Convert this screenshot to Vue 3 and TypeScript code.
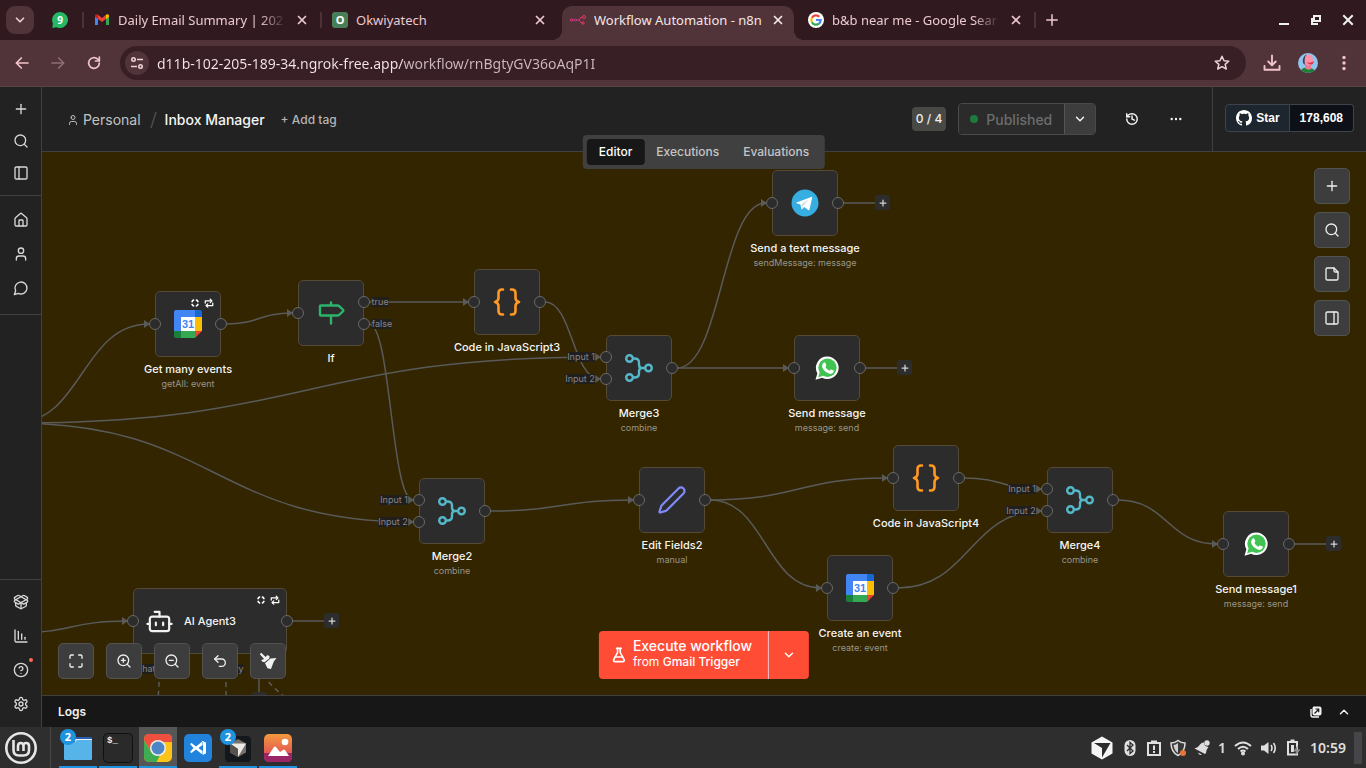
<script setup lang="ts">
import { computed, ref } from 'vue'

const icons: Record<string, string[]> = {
  plus: ['M5 12h14', 'M12 5v14'],
  search: ['M3 11a8 8 0 1 0 16 0a8 8 0 1 0-16 0', 'm21 21-4.3-4.3'],
  panelLeft: ['M5 3h14a2 2 0 0 1 2 2v14a2 2 0 0 1-2 2H5a2 2 0 0 1-2-2V5a2 2 0 0 1 2-2z', 'M9 3v18'],
  panelRight: ['M5 3h14a2 2 0 0 1 2 2v14a2 2 0 0 1-2 2H5a2 2 0 0 1-2-2V5a2 2 0 0 1 2-2z', 'M15 3v18'],
  home: ['M15 21v-8a1 1 0 0 0-1-1h-4a1 1 0 0 0-1 1v8', 'M3 10a2 2 0 0 1 .709-1.528l7-5.999a2 2 0 0 1 2.582 0l7 5.999A2 2 0 0 1 21 10v9a2 2 0 0 1-2 2H5a2 2 0 0 1-2-2z'],
  user: ['M19 21v-2a4 4 0 0 0-4-4H9a4 4 0 0 0-4 4v2', 'M8 7a4 4 0 1 0 8 0a4 4 0 1 0-8 0'],
  chat: ['M7.9 20A9 9 0 1 0 4 16.1L2 22Z'],
  package: ['M12 22v-9', 'M15.17 2.21a1.67 1.67 0 0 1 1.63 0L21 4.57a1.93 1.93 0 0 1 0 3.36L8.82 14.79a1.655 1.655 0 0 1-1.64 0L3 12.43a1.93 1.93 0 0 1 0-3.36z', 'M20 13v3.87a2.06 2.06 0 0 1-1.11 1.83l-6 3.08a1.93 1.93 0 0 1-1.78 0l-6-3.08A2.06 2.06 0 0 1 4 16.87V13', 'M21 12.43a1.93 1.93 0 0 0 0-3.36L8.83 2.2a1.64 1.64 0 0 0-1.63 0L3 4.57a1.93 1.93 0 0 0 0 3.36l12.18 6.86a1.636 1.636 0 0 0 1.63 0z'],
  chart: ['M13 17V9', 'M18 17v-3', 'M3 3v16a2 2 0 0 0 2 2h16', 'M8 17V5'],
  help: ['M2 12a10 10 0 1 0 20 0a10 10 0 1 0-20 0', 'M9.09 9a3 3 0 0 1 5.83 1c0 2-3 3-3 3', 'M12 17h.01'],
  settings: ['M12.22 2h-.44a2 2 0 0 0-2 2v.18a2 2 0 0 1-1 1.73l-.43.25a2 2 0 0 1-2 0l-.15-.08a2 2 0 0 0-2.73.73l-.22.38a2 2 0 0 0 .73 2.73l.15.1a2 2 0 0 1 1 1.72v.51a2 2 0 0 1-1 1.74l-.15.09a2 2 0 0 0-.73 2.73l.22.38a2 2 0 0 0 2.73.73l.15-.08a2 2 0 0 1 2 0l.43.25a2 2 0 0 1 1 1.73V20a2 2 0 0 0 2 2h.44a2 2 0 0 0 2-2v-.18a2 2 0 0 1 1-1.73l.43-.25a2 2 0 0 1 2 0l.15.08a2 2 0 0 0 2.73-.73l.22-.39a2 2 0 0 0-.73-2.73l-.15-.08a2 2 0 0 1-1-1.74v-.5a2 2 0 0 1 1-1.74l.15-.09a2 2 0 0 0 .73-2.73l-.22-.38a2 2 0 0 0-2.73-.73l-.15.08a2 2 0 0 1-2 0l-.43-.25a2 2 0 0 1-1-1.73V4a2 2 0 0 0-2-2z', 'M9 12a3 3 0 1 0 6 0a3 3 0 1 0-6 0'],
  maximize: ['M8 3H5a2 2 0 0 0-2 2v3', 'M21 8V5a2 2 0 0 0-2-2h-3', 'M3 16v3a2 2 0 0 0 2 2h3', 'M16 21h3a2 2 0 0 0 2-2v-3'],
  zoomIn: ['M3 11a8 8 0 1 0 16 0a8 8 0 1 0-16 0', 'm21 21-4.3-4.3', 'M11 8v6', 'M8 11h6'],
  zoomOut: ['M3 11a8 8 0 1 0 16 0a8 8 0 1 0-16 0', 'm21 21-4.3-4.3', 'M8 11h6'],
  undo: ['M9 14 4 9l5-5', 'M4 9h10.5a5.5 5.5 0 0 1 0 11H11'],
  history: ['M3 12a9 9 0 1 0 9-9 9.75 9.75 0 0 0-6.74 2.74L3 8', 'M3 3v5h5', 'M12 7v5l4 2'],
  flask: ['M14 2v6a2 2 0 0 0 .245.96l5.51 10.08A2 2 0 0 1 18 22H6a2 2 0 0 1-1.755-2.96l5.51-10.08A2 2 0 0 0 10 8V2', 'M6.453 15h11.094', 'M8.5 2h7'],
  note: ['M15 3H5a2 2 0 0 0-2 2v14a2 2 0 0 0 2 2h14a2 2 0 0 0 2-2V9Z', 'M15 3v4a2 2 0 0 0 2 2h4'],
  down: ['m6 9 6 6 6-6'],
  up: ['m6 15 6-6 6 6'],
  close: ['M6 6l12 12', 'M18 6 6 18'],
  back: ['M21 12H4', 'M11 4.500 3.500 12l7.500 7.500'],
  forward: ['M3 12h17', 'M13 4.500 20.500 12l-7.500 7.500'],
  reload: ['M20 12a8 8 0 1 1-2.600-5.900L20 8.500', 'M20 3v6h-6'],
  star: ['m12 3 2.700 6 6.300.6-4.800 4.200 1.500 6.200-5.700-3.300L6.300 20l1.500-6.200L3 9.600 9.300 9z'],
  download: ['M12 2v13', 'm7 10 5 5 5-5', 'M2 16v5h20v-5'],
  bot: ['M12 8V4H8', 'M6 8h12a2 2 0 0 1 2 2v8a2 2 0 0 1-2 2H6a2 2 0 0 1-2-2v-8a2 2 0 0 1 2-2z', 'M2 14h2', 'M20 14h2', 'M15 13v2', 'M9 13v2'],
  once: ['M5 8.500A8 8 0 0 1 8.500 5', 'M15.500 5A8 8 0 0 1 19 8.500', 'M19 15.500A8 8 0 0 1 15.500 19', 'M8.500 19A8 8 0 0 1 5 15.500'],
  repeat: ['M3 12V7h15', 'm15 3 4 4-4 4', 'M21 12v6H6', 'm9 14-4 4 4 4'],
}

interface Tab { kind: string; title: string; fade?: boolean; active?: boolean }
const tabs: Tab[] = [
  { kind: 'gmail', title: 'Daily Email Summary | 202', fade: true },
  { kind: 'okwi', title: 'Okwiyatech' },
  { kind: 'n8n', title: 'Workflow Automation - n8n', active: true },
  { kind: 'google', title: 'b&b near me - Google Sear', fade: true },
]
const url = ref('d11b-102-205-189-34.ngrok-free.app/workflow/rnBgtyGV36oAqP1I')

interface Port { x: number; y: number }
interface FlowNode {
  kind: string; title: string; sub?: string; x: number; y: number
  ins: number[]; outs: number[]; flags?: boolean; wide?: boolean
}
const nodes: FlowNode[] = [
  { kind: 'calendar', title: 'Get many events', sub: 'getAll: event', x: 113, y: 139, ins: [33], outs: [33], flags: true },
  { kind: 'if', title: 'If', x: 256, y: 128, ins: [33], outs: [22, 44] },
  { kind: 'code', title: 'Code in JavaScript3', x: 432, y: 117, ins: [33], outs: [33] },
  { kind: 'merge', title: 'Merge3', sub: 'combine', x: 564, y: 183, ins: [22, 44], outs: [33] },
  { kind: 'telegram', title: 'Send a text message', sub: 'sendMessage: message', x: 730, y: 18, ins: [33], outs: [33] },
  { kind: 'whatsapp', title: 'Send message', sub: 'message: send', x: 752, y: 183, ins: [33], outs: [33] },
  { kind: 'merge', title: 'Merge2', sub: 'combine', x: 377, y: 326, ins: [22, 44], outs: [33] },
  { kind: 'edit', title: 'Edit Fields2', sub: 'manual', x: 597, y: 315, ins: [33], outs: [33] },
  { kind: 'code', title: 'Code in JavaScript4', x: 851, y: 293, ins: [33], outs: [33] },
  { kind: 'merge', title: 'Merge4', sub: 'combine', x: 1005, y: 315, ins: [22, 44], outs: [33] },
  { kind: 'calendar', title: 'Create an event', sub: 'create: event', x: 785, y: 403, ins: [33], outs: [33] },
  { kind: 'whatsapp', title: 'Send message1', sub: 'message: send', x: 1181, y: 359, ins: [33], outs: [33] },
  { kind: 'agent', title: 'AI Agent3', x: 91, y: 436, ins: [33], outs: [33], flags: true, wide: true },
]
const NODE = 66
const WIDE = 154
function out(n: number, i = 0): Port {
  const v = nodes[n]
  return { x: v.x + (v.wide ? WIDE : NODE) + 5, y: v.y + v.outs[i] }
}
function into(n: number, i = 0): Port {
  const v = nodes[n]
  return { x: v.x - 6, y: v.y + v.ins[i] }
}
const source: Port = { x: -27, y: 271 }
const links: [Port, Port][] = [
  [source, into(0)],
  [source, into(3, 0)],
  [source, into(6, 1)],
  [{ x: -27, y: 481 }, into(12)],
  [out(0), into(1)],
  [out(1, 0), into(2)],
  [out(1, 1), into(6, 0)],
  [out(2), into(3, 1)],
  [out(3), into(4)],
  [out(3), into(5)],
  [out(6), into(7)],
  [out(7), into(8)],
  [out(7), into(10)],
  [out(8), into(9, 0)],
  [out(10), into(9, 1)],
  [out(9), into(11)],
]
const edges = computed(() => links.map(([a, b]) => {
  const h = (b.x - a.x) / 2
  return {
    line: `M${a.x} ${a.y}C${a.x + h} ${a.y} ${b.x - h} ${b.y} ${b.x} ${b.y}`,
    head: `M${b.x - 5} ${b.y - 4}L${b.x + 1} ${b.y}L${b.x - 5} ${b.y + 4}Z`,
  }
}))
const ends = [4, 5, 11, 12].map((n) => out(n))
const labels = [
  { text: 'true', x: 338, y: 150 },
  { text: 'false', x: 340, y: 172 },
  { text: 'Input 1', x: 539, y: 205 },
  { text: 'Input 2', x: 538, y: 227 },
  { text: 'Input 1', x: 352, y: 348 },
  { text: 'Input 2', x: 351, y: 370 },
  { text: 'Input 1', x: 980, y: 337 },
  { text: 'Input 2', x: 979, y: 359 },
  { text: 'Chat Model', x: 118, y: 517 },
  { text: 'Memory', x: 184, y: 517 },
]
const at = (x: number, y: number) => ({ left: x + 'px', top: y + 'px' })

const sideGroups = [['plus', 'search', 'panelLeft'], ['home', 'user', 'chat']]
const sideBottom = ['package', 'chart', 'help', 'settings']
const views = ['Editor', 'Executions', 'Evaluations']
const view = ref('Editor')
const apps = [
  { kind: 'files', badge: 2, open: true },
  { kind: 'terminal', open: true },
  { kind: 'chrome', open: true, focus: true },
  { kind: 'vscode' },
  { kind: 'cursor', badge: 2, open: true },
  { kind: 'photos', open: true },
]
</script>

<template>
  <div class="screen">
    <header class="tabstrip">
      <button class="tab-search" aria-label="Search tabs"><svg class="ic s14 bold" viewBox="0 0 24 24"><path v-for="d in icons.down" :key="d" :d="d" /></svg></button>
      <button class="pinned" aria-label="WhatsApp">
        <svg width="16" height="16" viewBox="0 0 16 16"><path d="M8 0a8 8 0 1 1-3.500 15.200L.3 16l.6-4.500A8 8 0 0 1 8 0z" fill="#25b865" /><text x="8" y="11.500" text-anchor="middle" class="nine">9</text></svg>
      </button>
      <div v-for="t in tabs" :key="t.title" class="tab" :class="{ active: t.active }">
        <svg v-if="t.kind === 'gmail'" width="16" height="16" viewBox="0 0 16 16"><path d="M1 4v9h3V6z" fill="#4285f4" /><path d="M12 6v7h3V4z" fill="#34a853" /><path d="M4 2.800 8 6l4-3.200V7L8 10 4 7z" fill="#ea4335" /><path d="M1 4c0-2 1.800-2 3-1.200V7L1 5z" fill="#c5221f" /><path d="M15 4c0-2-1.800-2-3-1.200V7l3-2z" fill="#fbbc04" /></svg>
        <span v-else-if="t.kind === 'okwi'" class="okwi">O</span>
        <svg v-else-if="t.kind === 'n8n'" width="16" height="16" viewBox="0 0 16 16" fill="none" stroke="#e8386d"><circle cx="1.500" cy="8" r="1.100" /><circle cx="5.500" cy="8" r="1.100" stroke="#b03a9d" /><circle cx="14" cy="5" r="1.500" /><circle cx="13" cy="11" r="1.200" /><path d="M2.700 8h1.500M6.700 8h2q1 0 1.200-1.200.3-1.800 2.600-1.800M8.700 8q1 0 1.500 1.500.4 1.500 1.700 1.500" /></svg>
        <svg v-else width="16" height="16" viewBox="0 0 16 16"><circle cx="8" cy="8" r="8" fill="#fff" /><g fill="none" stroke-width="2.200"><path d="M11.300 4.700A4.700 4.700 0 0 0 3.900 5.700" stroke="#ea4335" /><path d="M3.900 5.700a4.700 4.700 0 0 0 0 4.600" stroke="#fbbc05" /><path d="M3.900 10.300a4.700 4.700 0 0 0 7 1.400" stroke="#34a853" /><path d="M10.900 11.700A4.700 4.700 0 0 0 12.700 8H8" stroke="#4285f4" /></g></svg>
        <span class="tab-title" :class="{ fade: t.fade }">{{ t.title }}</span>
        <button class="tab-close" :aria-label="'Close ' + t.title"><svg class="ic s14 bold" viewBox="0 0 24 24"><path v-for="d in icons.close" :key="d" :d="d" /></svg></button>
      </div>
      <button class="new-tab" aria-label="New tab"><svg class="ic s18" viewBox="0 0 24 24"><path v-for="d in icons.plus" :key="d" :d="d" /></svg></button>
      <div class="window-controls">
        <button aria-label="Minimise"><svg width="14" height="14" viewBox="0 0 14 14"><path d="M2 11h10" stroke="#f0f0f0" stroke-width="2" /></svg></button>
        <button aria-label="Restore"><svg width="14" height="14" viewBox="0 0 14 14" fill="none" stroke="#f0f0f0" stroke-width="2"><path d="M5 3h6v5H5zM3 5v6h6" /></svg></button>
        <button aria-label="Close window"><svg width="14" height="14" viewBox="0 0 14 14"><path d="m3 3 8 8M11 3l-8 8" stroke="#f0f0f0" stroke-width="2" stroke-linecap="square" /></svg></button>
      </div>
    </header>

    <div class="toolbar">
      <nav class="nav-buttons">
        <button v-for="n in ['back', 'forward', 'reload']" :key="n" :class="n" :aria-label="n"><svg class="ic s16 mid" viewBox="0 0 24 24"><path v-for="d in icons[n]" :key="d" :d="d" /></svg></button>
      </nav>
      <div class="omnibox">
        <button class="site" aria-label="Site information">
          <svg width="14" height="14" viewBox="0 0 14 14" fill="none" stroke="#ecd3d7" stroke-width="1.600"><circle cx="3.500" cy="3.500" r="1.700" /><circle cx="10.500" cy="10.500" r="1.700" /><path d="M7 3.500h6M1 10.500h6" /></svg>
        </button>
        <input v-model="url" class="url" aria-label="Address" spellcheck="false" />
        <button class="bookmark" aria-label="Bookmark"><svg class="ic s18" viewBox="0 0 24 24"><path v-for="d in icons.star" :key="d" :d="d" /></svg></button>
      </div>
      <nav class="nav-buttons">
        <button aria-label="Downloads"><svg class="ic s18 mid" viewBox="0 0 24 24"><path v-for="d in icons.download" :key="d" :d="d" /></svg></button>
        <button aria-label="Profile">
          <svg width="20" height="20" viewBox="0 0 20 20"><defs><clipPath id="face"><circle cx="10" cy="10" r="10" /></clipPath></defs><g clip-path="url(#face)"><path d="M0 0h20v20H0z" fill="#8fc4ee" /><path d="M2 20q1-6 8-5 7 0 8 5z" fill="#1c8039" /><path d="M7 9h6v7q-3 2-6-1z" fill="#e87b90" /><ellipse cx="10.500" cy="7" rx="4.500" ry="5.500" fill="#ff92a8" /><path d="M5 10Q4 3 9 1.500 5.500 4 7 12z" fill="#3b3f52" /><path d="M8 9q5 2 8-1-1 5-5 3z" fill="#d8304b" /></g></svg>
        </button>
        <button aria-label="Menu"><svg width="16" height="16" viewBox="0 0 16 16" fill="#f2c3cc"><circle cx="8" cy="2.500" r="1.700" /><circle cx="8" cy="8" r="1.700" /><circle cx="8" cy="13.500" r="1.700" /></svg></button>
      </nav>
    </div>

    <div class="app">
      <aside class="sidebar">
        <nav v-for="(g, i) in sideGroups" :key="i" :class="'group-' + i">
          <button v-for="n in g" :key="n" :aria-label="n"><svg class="ic s16" viewBox="0 0 24 24"><path v-for="d in icons[n]" :key="d" :d="d" /></svg></button>
        </nav>
        <nav class="group-bottom">
          <button v-for="n in sideBottom" :key="n" :class="n" :aria-label="n"><svg class="ic s16" viewBox="0 0 24 24"><path v-for="d in icons[n]" :key="d" :d="d" /></svg></button>
        </nav>
      </aside>

      <main class="workspace">
        <header class="head">
          <div class="crumbs">
            <a href="#" class="project"><svg class="ic s12" viewBox="0 0 24 24"><path v-for="d in icons.user" :key="d" :d="d" /></svg>Personal</a>
            <svg class="slash" width="7" height="18" viewBox="0 0 7 18"><path d="M6 1 1 17" stroke="#4a4a4a" stroke-width="1.500" /></svg>
            <h1>Inbox Manager</h1>
            <button class="add-tag">+ Add tag</button>
          </div>
          <div class="actions">
            <span class="count">0 / 4</span>
            <div class="publish">
              <button class="published" disabled><i></i>Published</button>
              <button class="more" aria-label="Publish options"><svg class="ic s14 mid" viewBox="0 0 24 24"><path :d="icons.down[0]" /></svg></button>
            </div>
            <button class="icon-btn" aria-label="History"><svg class="ic s14 mid" viewBox="0 0 24 24"><path v-for="d in icons.history" :key="d" :d="d" /></svg></button>
            <button class="icon-btn" aria-label="More"><svg width="12" height="12" viewBox="0 0 12 12" fill="#f2f2f2"><circle cx="1.700" cy="6" r="1.200" /><circle cx="6" cy="6" r="1.200" /><circle cx="10.300" cy="6" r="1.200" /></svg></button>
          </div>
          <div class="github">
            <a href="#" class="gh-star"><svg width="16" height="16" viewBox="0 0 16 16" fill="#fff"><path d="M8 0C3.580 0 0 3.580 0 8c0 3.540 2.290 6.530 5.470 7.590.4.070.55-.17.55-.38 0-.19-.01-.82-.01-1.490-2.010.37-2.530-.49-2.690-.94-.09-.23-.48-.94-.82-1.130-.28-.15-.68-.52-.01-.53.63-.01 1.080.58 1.230.82.72 1.210 1.870.87 2.330.66.07-.52.28-.87.51-1.070-1.780-.2-3.640-.89-3.640-3.950 0-.87.31-1.590.82-2.150-.08-.2-.36-1.020.08-2.120 0 0 .67-.21 2.200.82.64-.18 1.320-.27 2-.27s1.360.09 2 .27c1.530-1.040 2.200-.82 2.200-.82.44 1.100.16 1.920.08 2.120.51.56.82 1.270.82 2.150 0 3.070-1.870 3.750-3.650 3.950.29.25.54.73.54 1.480 0 1.070-.01 1.930-.01 2.200 0 .21.15.46.55.38A8.010 8.010 0 0 0 16 8c0-4.420-3.580-8-8-8z" /></svg>Star</a>
            <a href="#" class="gh-count">178,608</a>
          </div>
        </header>

        <nav class="views">
          <button v-for="v in views" :key="v" :class="{ on: v === view }" @click="view = v">{{ v }}</button>
        </nav>

        <section class="canvas">
          <svg class="edges">
            <g v-for="(e, i) in edges" :key="i"><path :d="e.line" class="wire" /><path :d="e.head" class="head-mark" /></g>
            <path v-for="(e, i) in ends" :key="'e' + i" :d="`M${e.x} ${e.y}h32`" class="wire" />
            <path d="M118 503Q118 525 115 560M184 503V560" class="wire dashed" />
            <path d="M217 503V545" class="wire" />
            <path d="M217 515Q224 532 250 550" class="wire dashed" />
          </svg>
          <button v-for="(e, i) in ends" :key="'p' + i" class="add-node" :style="at(e.x + 32, e.y - 8)" aria-label="Add node"><svg class="ic s10 bold" viewBox="0 0 24 24"><path v-for="d in icons.plus" :key="d" :d="d" /></svg></button>
          <button class="add-node" :style="at(210, 540)" aria-label="Add tool"></button>
          <span v-for="(l, i) in labels" :key="'l' + i" class="port-label" :style="at(l.x, l.y)">{{ l.text }}</span>

          <article v-for="(n, i) in nodes" :key="i" class="node" :class="{ wide: n.wide }" :style="at(n.x, n.y)">
            <div class="box">
              <svg v-if="n.kind === 'calendar'" width="28" height="28" viewBox="0 0 28 28"><path d="M2 0h19v7H7v14H0V2q0-2 2-2z" fill="#4285f4" /><path d="M21 0h5q2 0 2 2v5h-7z" fill="#1967d2" /><path d="M21 7h7v14h-7z" fill="#fbbc04" /><path d="M7 21h14v7H7z" fill="#34a853" /><path d="M0 21h7v7H2q-2 0-2-2z" fill="#188038" /><path d="M21 21h7l-7 7z" fill="#ea4335" /><path d="M7 7h14v14H7z" fill="#fff" /><text x="14" y="18" text-anchor="middle" class="cal">31</text></svg>
              <svg v-else-if="n.kind === 'if'" width="28" height="28" viewBox="-14 -14 28 28" fill="none" stroke="#2cb46b" stroke-width="2.400" stroke-linecap="round" stroke-linejoin="round"><path d="M0-10.500v3M0 3v7.500M-10.200-7.500H6.500q1 0 1.700.6l3.600 3.400q1 1 0 2L8.200 1.900Q7.500 2.500 6.500 2.500h-16.700q-.8 0-.8-.8v-8.400q0-.8.8-.8z" /></svg>
              <svg v-else-if="n.kind === 'code'" width="28" height="28" viewBox="-14 -14 28 28" fill="none" stroke="#ff9922" stroke-width="2.600" stroke-linecap="round" stroke-linejoin="round"><path d="M-4-12.500h-1q-3.500 0-3.500 3.500v5q0 3-3.500 4 3.500 1 3.500 4v5q0 3.500 3.500 3.500h1M4-12.500h1q3.500 0 3.500 3.500v5q0 3 3.500 4-3.500 1-3.500 4v5q0 3.500-3.500 3.500h-1" /></svg>
              <svg v-else-if="n.kind === 'merge'" width="28" height="28" viewBox="-14 -14 28 28" fill="none" stroke="#54b8c9" stroke-width="2.400"><circle cx="-9.500" cy="-9.500" r="3.300" /><circle cx="-9.500" cy="9.500" r="3.300" /><circle cx="9.500" cy="0" r="3.300" /><path d="M-6-9.500h1.500Q0-9.500 0-5.500v2Q0 0 3 0h3M-6 9.500h1.500Q0 9.500 0 5.500v-2Q0 0 3 0" /></svg>
              <svg v-else-if="n.kind === 'telegram'" width="28" height="28" viewBox="0 0 28 28"><circle cx="14" cy="14" r="13.500" fill="#37aee2" /><path d="M5.500 13.600 20.300 7.900q1-.3.800.9l-2.500 11.500q-.4 1.300-1.500.6l-3.800-2.800-2 2q-.7.600-.9-.4l-1-4.200-3.800-1.200q-.9-.4-.1-.7z" fill="#fff" /><path d="m10.400 15.300 7.400-4.900-5.700 6-.5 3.200z" fill="#c8daea" /></svg>
              <svg v-else-if="n.kind === 'whatsapp'" width="26" height="26" viewBox="0 0 26 26"><path d="M13.500 1.500a11.300 11.300 0 1 1-5.400 21.300L1.500 24.700l1.900-6.400A11.300 11.300 0 0 1 13.500 1.500z" fill="#fff" /><circle cx="13.500" cy="12.800" r="9.200" fill="#40c351" /><path d="M4.200 22.200 5.700 17l3.500 3.700z" fill="#40c351" /><path d="M9.800 7.500q1-.6 1.500.2l1 2.400q.2.600-.9 1.800 1.500 2.800 4 3.800 1.200-1.500 1.700-1.300l2.500 1.200q.5.400 0 1.500-1 2-3.400 1.800-6.500-1.500-8.200-7.400-.2-2.700 1.800-4z" fill="#fff" /></svg>
              <svg v-else-if="n.kind === 'edit'" width="30" height="30" viewBox="0 0 24 24" fill="none" stroke="#8189f7" stroke-width="1.800" stroke-linecap="round" stroke-linejoin="round"><path d="M21.174 6.812a1 1 0 0 0-3.986-3.987L3.842 16.174a2 2 0 0 0-.5.83l-1.321 4.352a.5.5 0 0 0 .623.622l4.353-1.320a2 2 0 0 0 .83-.497z" /></svg>
              <template v-else>
                <svg class="ic robot" viewBox="0 0 24 24"><path v-for="d in icons.bot" :key="d" :d="d" /></svg>
                <strong>{{ n.title }}</strong>
              </template>
              <span v-if="n.flags" class="flags">
                <svg class="ic s10 heavy" viewBox="0 0 24 24"><path v-for="d in icons.once" :key="d" :d="d" /></svg>
                <svg class="ic s10 bold" viewBox="0 0 24 24"><path v-for="d in icons.repeat" :key="d" :d="d" /></svg>
              </span>
              <i v-for="y in n.ins" :key="'i' + y" class="port in" :style="{ top: y + 'px' }"></i>
              <i v-for="y in n.outs" :key="'o' + y" class="port out" :style="{ top: y + 'px' }"></i>
            </div>
            <template v-if="!n.wide">
              <strong>{{ n.title }}</strong>
              <small v-if="n.sub">{{ n.sub }}</small>
            </template>
          </article>

          <div class="controls side">
            <button v-for="n in ['plus', 'search', 'note', 'panelRight']" :key="n" :aria-label="n"><svg class="ic s16" viewBox="0 0 24 24"><path v-for="d in icons[n]" :key="d" :d="d" /></svg></button>
          </div>
          <div class="controls zoom">
            <button v-for="n in ['maximize', 'zoomIn', 'zoomOut', 'undo']" :key="n" :aria-label="n"><svg class="ic s16" viewBox="0 0 24 24"><path v-for="d in icons[n]" :key="d" :d="d" /></svg></button>
            <button aria-label="Tidy up"><svg width="18" height="18" viewBox="0 0 18 18" fill="#f2f2f2"><path d="M.800 2.200 2.200.800 6.700 5l1.800-1.900 2.100 1.200-.3 2.200L5.500 10.300l-2.600-.9-.4-1.400 2.600-1z" /><path d="M6 11.200 11.500 6.500 17.500 6 14.800 9.500 12 17 8.500 16.200z" /></svg></button>
          </div>
          <div class="execute">
            <button class="run"><svg class="ic s16 mid" viewBox="0 0 24 24"><path v-for="d in icons.flask" :key="d" :d="d" /></svg><span>Execute workflow<small>from <b>Gmail Trigger</b></small></span></button>
            <button class="pick" aria-label="Choose trigger"><svg class="ic s14 mid" viewBox="0 0 24 24"><path :d="icons.down[0]" /></svg></button>
          </div>
        </section>

        <footer class="logs">
          <span>Logs</span>
          <button aria-label="Pop out"><svg width="12" height="12" viewBox="0 0 12 12"><path d="M3.500.5h6q2 0 2 2v5q0 2-2 2h-5q-2 0-2-2v-5q0-1.500 1-2z" fill="#f4f4f4" /><path d="M1 3v6q0 2 2 2h6" fill="none" stroke="#f4f4f4" stroke-width="1.400" /><path d="m4.500 7.500 4-4M5.500 3h3.200v3.200" fill="none" stroke="#171717" stroke-width="1.200" /></svg></button>
          <button aria-label="Expand logs"><svg class="ic s14 mid" viewBox="0 0 24 24"><path :d="icons.up[0]" /></svg></button>
        </footer>
      </main>
    </div>

    <footer class="taskbar">
      <button class="mint" aria-label="Menu"><svg width="32" height="32" viewBox="0 0 32 32" fill="none" stroke="#e6e6e6"><circle cx="16" cy="16" r="14.700" stroke-width="2.600" /><path d="M8.500 8v10q0 5.500 5.500 5.500h4.500q5.500 0 5.500-5.500v-4q0-3-2.800-3t-2.700 3v5M18.500 14q0-3-2.700-3t-2.800 3v5" stroke-width="2.600" /></svg></button>
      <div class="apps">
        <button v-for="a in apps" :key="a.kind" :class="{ open: a.open, focus: a.focus }" :aria-label="a.kind">
          <svg v-if="a.kind === 'files'" width="30" height="30" viewBox="0 0 30 30"><path d="M9 4h18q2 0 2 2v4H9z" fill="#2a5fb4" /><path d="M12 6h17v4H12z" fill="#e9f2fa" /><path d="M1 9h11l2-2h15v19q0 1-1 1H2q-1 0-1-1z" fill="#56b4e9" /></svg>
          <svg v-else-if="a.kind === 'terminal'" width="30" height="30" viewBox="0 0 30 30"><rect x=".500" y=".500" width="29" height="29" rx="4" fill="#2a2a2a" stroke="#111" /><text x="4" y="10" class="term">$_</text></svg>
          <svg v-else-if="a.kind === 'chrome'" width="30" height="30" viewBox="0 0 30 30"><defs><clipPath id="sq"><rect x="1" y="1" width="28" height="28" rx="5" /></clipPath></defs><g clip-path="url(#sq)"><path d="M0 0h30v30H0z" fill="#fcc419" /><path d="M0 0h30v9H14L8 18 0 6z" fill="#ee4f3f" /><path d="M0 6l9 14 8 2-4 8H0z" fill="#3fab52" /></g><circle cx="15" cy="15" r="8" fill="#f3efe8" /><circle cx="15" cy="15" r="6.500" fill="#4d86c6" /></svg>
          <svg v-else-if="a.kind === 'vscode'" width="30" height="30" viewBox="0 0 30 30"><rect x="1" y="1" width="28" height="28" rx="5" fill="#2283dd" /><path d="M20 8v14l-7-5.500L8.500 20 7 19l3.500-4L7 11l1.500-1 4.500 3.500zM19.500 8 23 9.500v11L19.500 22zM19.500 12v6l-4-3z" fill="#fff" fill-rule="evenodd" /></svg>
          <svg v-else-if="a.kind === 'cursor'" width="30" height="30" viewBox="0 0 30 30"><rect x="2" y="3" width="26" height="26" rx="4" fill="#14171b" /><path d="m15 6 8 4.500v9L15 24l-8-4.500v-9z" fill="#77716c" /><path d="M7 10.500h16L15 24v-8z" fill="#eceae6" /><path d="M7 10.500 15 16v8l-8-4.500z" fill="#57524e" /></svg>
          <svg v-else width="30" height="30" viewBox="0 0 30 30"><defs><linearGradient id="sky" x2="0" y2="1"><stop stop-color="#f49a3e" /><stop offset="1" stop-color="#dc3b5c" /></linearGradient></defs><rect x="1" y="1" width="28" height="28" rx="5" fill="url(#sky)" /><path d="M1 20h28v4q0 5-5 5H6q-5 0-5-5z" fill="#9c2566" /><path d="m5 23 6-9q1-1 2 0l4 5 3-2q1-1 2 0l4 6z" fill="#fff" /><circle cx="22" cy="9" r="3.300" fill="#fff" /></svg>
          <em v-if="a.badge">{{ a.badge }}</em>
        </button>
      </div>
      <div class="tray">
        <svg width="24" height="24" viewBox="0 0 24 24"><path d="m12 .500 10.500 6v11L12 23.500 1.500 17.500v-11z" fill="#f5f5f5" /><path d="M4 7h16.500L12 21.500V12z" fill="#2c2c2c" /></svg>
        <svg width="16" height="18" viewBox="-2 0 16 18"><rect x=".500" y="1" width="11" height="16" rx="5.500" fill="#e0e0e0" /><path d="m3 6 6 6-3 2.500V3.500L9 6l-6 6" fill="none" stroke="#2f2f2f" stroke-width="1.300" /></svg>
        <svg width="16" height="16" viewBox="-1 0 16 16" fill="none" stroke="#e0e0e0" stroke-width="2"><path d="M1 3h12v12H1z" /><path d="M4 1.500h6M7 5.500V10M7 11v2" /></svg>
        <svg width="16" height="18" viewBox="0 0 16 18"><path d="M8 1.500Q11 4 15 4q0 9-7 12.500Q1 13 1 4q4 0 7-2.500z" fill="#3a3a3a" stroke="#dcdcdc" stroke-width="1.500" /><path d="M8 4v10Q4 11 3.500 6 6 6 8 4z" fill="#cfcfcf" /><circle cx="13" cy="14" r="3" fill="#e8743b" /></svg>
        <svg width="16" height="16" viewBox="0 0 16 16" fill="#dedede"><path d="M.500 8.500q4-1 5.500-4 2-2.500 4-2 0 4 4.500 4.500-2 2-2.500 6l-1 1zM4 12.500l4 2q-3 1.500-4-2z" /><circle cx="13" cy="3" r="2.700" /></svg>
        <b class="notes">1</b>
        <svg width="18" height="16" viewBox="0 0 18 16" fill="none" stroke="#e0e0e0" stroke-width="2"><path d="M1 6q8-7 16 0M4 9q5-4.500 10 0M6.500 11.500q2.500-2 5 0" /><circle cx="9" cy="13.500" r="1" fill="#e0e0e0" /></svg>
        <svg width="18" height="16" viewBox="0 0 18 16"><path d="M1 5.500h3L8.500 2v12L4 10.500H1z" fill="#dedede" /><path d="M11 5q2 3 0 6M13.500 3q3.500 5 0 10" fill="none" stroke="#dedede" stroke-width="1.600" /></svg>
        <svg width="16" height="17" viewBox="0 0 16 17"><path d="M2 3h9v12.500H2zM4.500 1.500h4" fill="none" stroke="#e0e0e0" stroke-width="2" /><path d="M5 6h3v7H5z" fill="#e0e0e0" /><path d="M12 6.500 7 12.500h3l-.500 4 5-6h-3.500z" fill="#8c8c8c" /></svg>
        <time>10:59</time>
        <i class="desk"></i>
      </div>
    </footer>
  </div>
</template>

<style>
html, body { margin: 0; background: #222; }
</style>

<style scoped>
* { box-sizing: border-box; }
button, input { font: inherit; color: inherit; border: 0; background: none; padding: 0; margin: 0; }
button { display: flex; align-items: center; justify-content: center; flex: none; cursor: pointer; }
a { color: inherit; text-decoration: none; }
svg { flex: none; display: block; }
.ic { fill: none; stroke: currentColor; stroke-width: 2; stroke-linecap: round; stroke-linejoin: round; }
.mid { stroke-width: 2.500; }
.bold { stroke-width: 3; }
.heavy { stroke-width: 4; }
.s10 { width: 10px; height: 10px; }
.s12 { width: 12px; height: 12px; }
.s14 { width: 14px; height: 14px; }
.s16 { width: 16px; height: 16px; }
.s18 { width: 18px; height: 18px; }

.screen { display: flex; flex-direction: column; height: 100vh; overflow: hidden; font-family: Inter, "Liberation Sans", sans-serif; color: #f2f2f2; }

.tabstrip { flex: none; display: flex; height: 40px; background: #301a20; color: #ecc8cf; font: 13px "Noto Sans", sans-serif; padding-left: 6px; }
.tab-search { width: 28px; height: 28px; margin-top: 6px; border-radius: 9px; background: #503439; }
.pinned { width: 40px; height: 34px; margin: 3px 6px 0; }
.nine { font: bold 10px "Noto Sans", sans-serif; fill: #fff; }
.tab { position: relative; flex: 0 1 232px; min-width: 0; display: flex; align-items: center; gap: 8px; height: 34px; margin: 6px 6px 0 0; padding: 0 8px 6px; }
.tab.active { background: #503439; border-radius: 10px 10px 0 0; color: #f4e4e6; }
.tab.active::before, .tab.active::after { content: ""; position: absolute; bottom: 0; width: 10px; height: 10px; }
.tab.active::before { right: 100%; background: radial-gradient(circle at 0 0, transparent 10px, #503439 10px); }
.tab.active::after { left: 100%; background: radial-gradient(circle at 100% 0, transparent 10px, #503439 10px); }
.tab:nth-of-type(1)::before, .tab:nth-of-type(1)::after, .tab:nth-of-type(4)::after { content: ""; position: absolute; top: 6px; width: 2px; height: 16px; background: #4c3238; }
.tab:nth-of-type(1)::before { left: -4px; }
.tab:nth-of-type(1)::after, .tab:nth-of-type(4)::after { right: -4px; }
.tab-title { flex: 1; min-width: 0; overflow: hidden; white-space: nowrap; line-height: 20px; }
.tab-title.fade { -webkit-mask-image: linear-gradient(90deg, #000 calc(100% - 26px), transparent); mask-image: linear-gradient(90deg, #000 calc(100% - 26px), transparent); }
.tab-close { width: 16px; height: 16px; }
.okwi { flex: none; width: 16px; height: 16px; border-radius: 3px; background: #487e58; color: #fff; font-weight: bold; font-size: 11px; line-height: 16px; text-align: center; }
.new-tab { width: 28px; height: 40px; }
.window-controls { margin-left: auto; display: flex; padding-right: 2px; }
.window-controls button { width: 32px; height: 40px; }

.toolbar { flex: none; display: flex; align-items: center; gap: 12px; height: 47px; padding: 0 8px; background: #503439; border-bottom: 1px solid #5d4347; color: #f2c3cc; }
.nav-buttons { display: flex; gap: 8px; }
.nav-buttons button { width: 28px; height: 28px; }
.nav-buttons .forward { color: #8f6d73; }
.omnibox { flex: 1; display: flex; align-items: center; height: 34px; padding: 0 15px 0 5px; border-radius: 17px; background: #381f25; }
.site { width: 24px; height: 24px; border-radius: 12px; background: #503439; }
.url { flex: 1; min-width: 0; height: 24px; margin-left: 8px; font: 14px "Noto Sans", sans-serif; color: transparent; background: linear-gradient(90deg, #f5e6e8 247px, #cdb9bc 247px); -webkit-background-clip: text; background-clip: text; outline: 0; }
.bookmark { width: 18px; color: #ecd3d7; }

.app { flex: 1; min-height: 0; display: flex; background: #222; }
.sidebar { flex: none; display: flex; flex-direction: column; width: 42px; border-right: 1px solid #404040; color: #d8d8d8; }
.sidebar button { width: 100%; height: 34px; position: relative; }
.sidebar .group-0 { padding: 6px 0; border-bottom: 1px solid #404040; }
.sidebar .group-0 button { height: 32px; }
.sidebar .group-1 { padding: 7px 0 9px; border-bottom: 1px solid #404040; }
.sidebar .group-bottom { margin-top: auto; padding: 5px 0 6px; border-top: 1px solid #404040; }
.sidebar .help::after { content: ""; position: absolute; right: 8px; top: 5px; width: 4px; height: 4px; border-radius: 2px; background: #ff6a55; }

.workspace { position: relative; flex: 1; min-width: 0; display: flex; flex-direction: column; }
.head { flex: none; display: flex; align-items: center; height: 65px; border-bottom: 1px solid #404040; }
.crumbs { flex: 1; display: flex; align-items: center; padding: 2px 0 0 25px; color: #c2c2c2; font-size: 14px; line-height: 20px; }
.project { display: flex; align-items: center; gap: 4px; }
.slash { margin: 0 8px 0 9px; }
h1 { margin: 0; font-size: 14px; font-weight: 500; color: #f5f5f5; }
.add-tag { margin-left: 16px; font-size: 12px; font-weight: 500; color: #b5b5b5; }
.actions { display: flex; align-items: center; padding-right: 22px; }
.count { height: 24px; padding: 0 4px; border-radius: 4px; background: #484845; font-size: 12px; font-weight: 500; line-height: 24px; color: #eee; }
.publish { display: flex; height: 32px; margin: 0 22px 0 12px; border: 1px solid #4a4a4a; border-radius: 4px; overflow: hidden; }
.published { gap: 8px; padding: 0 12px 0 11px; background: #2b2b2b; color: #6d6d6d; font-size: 14px; font-weight: 500; cursor: default; }
.published i { width: 8px; height: 8px; border-radius: 4px; background: #1d7a3f; }
.more { width: 31px; border-left: 1px solid #555; background: #3d3d3d; }
.icon-btn { width: 28px; height: 28px; }
.icon-btn + .icon-btn { margin-left: 16px; }
.github { align-self: stretch; display: flex; align-items: center; border-left: 1px solid #404040; padding: 0 12px 2px; font: bold 12px "Liberation Sans", sans-serif; color: #fff; }
.gh-star, .gh-count { display: flex; align-items: center; height: 28px; border: 1px solid #3d444d; }
.gh-star { gap: 4px; padding: 0 9px 0 10px; border-radius: 4px 0 0 4px; background: #1d252e; }
.gh-count { padding: 0 10px; border-left: 0; border-radius: 0 4px 4px 0; background: #0d1117; }

.views { position: absolute; z-index: 3; top: 48px; left: 50%; transform: translateX(-50%); display: flex; padding: 4px; border-radius: 4px; background: #404040; font-size: 12px; font-weight: 500; color: #c4c4c4; }
.views button { height: 26px; padding: 0 12px 2px; border-radius: 4px; }
.views .on { background: #171717; color: #fff; }

.canvas { position: relative; flex: 1; min-height: 0; overflow: hidden; background: #322500; }
.edges { position: absolute; inset: 0; width: 100%; height: 100%; }
.wire { fill: none; stroke: #5a5a5a; stroke-width: 1.500; }
.dashed { stroke-dasharray: 5 4; }
.head-mark { fill: #5a5a5a; }
.port-label { position: absolute; transform: translate(-50%, -50%); background: #211f1d; color: #85858b; font-size: 9px; line-height: 10px; white-space: nowrap; }
.add-node { position: absolute; width: 15px; height: 15px; border-radius: 3px; background: #2d2d2d; color: #d5d5d5; }
.node { position: absolute; width: 66px; display: flex; flex-direction: column; align-items: center; white-space: nowrap; }
.box { position: relative; display: flex; align-items: center; justify-content: center; width: 100%; height: 66px; border-radius: 5px; border: 1px solid #544a35; background: #2c2c2c; }
.node strong { margin-top: 4px; font-size: 11px; font-weight: 500; line-height: 16px; color: #f5f5f5; }
.node small { font-size: 9px; line-height: 13px; color: #9a958a; }
.node.wide { width: 154px; }
.wide .box { justify-content: flex-start; padding-left: 11px; gap: 10px; }
.wide .box strong { margin: 0; }
.robot { width: 29px; height: 29px; stroke-width: 1.800; }
.flags { position: absolute; top: 6px; right: 6px; display: flex; gap: 4px; color: #fff; }
.port { position: absolute; width: 12px; height: 12px; margin: -7px; border-radius: 6px; border: 1px solid #696969; background: #2c2c2c; }
.port.in { left: 0; }
.port.out { right: 0; }
.cal { font: bold 11px "Liberation Sans", sans-serif; fill: #4285f4; }

.controls { position: absolute; z-index: 2; display: flex; }
.controls button { width: 36px; height: 36px; border: 1px solid #525252; border-radius: 5px; background: #3d3d3d; color: #eee; }
.side { top: 16px; right: 16px; flex-direction: column; gap: 8px; }
.zoom { left: 16px; bottom: 16px; gap: 12px; }
.execute { position: absolute; z-index: 2; left: 50%; bottom: 16px; transform: translateX(-50%); display: flex; height: 48px; border-radius: 4px; overflow: hidden; background: #ff4c35; color: #fff; }
.run { gap: 6px; padding: 0 16px 0 12px; text-align: left; font-size: 14px; font-weight: 500; line-height: 17px; }
.run span { padding-bottom: 3px; }
.run small { display: block; font-size: 12px; font-weight: 400; line-height: 16px; }
.run b { font-weight: 500; }
.pick { width: 41px; border-left: 1px solid #f3c3cf; }
.logs { flex: none; display: flex; align-items: center; gap: 12px; height: 32px; padding: 0 14px 0 16px; border-top: 1px solid #404040; background: #171717; font-size: 12px; font-weight: 600; }
.logs span { flex: 1; }
.logs button { width: 16px; height: 20px; }

.taskbar { flex: none; display: flex; align-items: stretch; height: 41px; background: #2e2e2e; font-family: "Noto Sans", sans-serif; }
.mint { width: 51px; padding-right: 9px; border-right: 1px solid #474747; }
.apps { flex: 1; display: flex; gap: 2px; padding-left: 8px; }
.apps button { position: relative; width: 38px; }
.apps .focus { background: #565656; }
.apps .open { border-bottom: 2px solid #1e94e0; padding-top: 2px; }
.apps em { position: absolute; left: 1px; top: 2px; width: 16px; height: 16px; border-radius: 8px; background: #1e94e0; color: #fff; font: bold 11px/16px "Noto Sans", sans-serif; text-align: center; }
.term { font: bold 9px "Liberation Mono", monospace; fill: #eee; }
.tray { display: flex; align-items: center; gap: 8px; padding-right: 4px; color: #dedede; font-size: 14px; }
.notes, time { font-size: 14px; font-weight: 600; }
.desk { width: 8px; height: 32px; background: #46464a; }
</style>
